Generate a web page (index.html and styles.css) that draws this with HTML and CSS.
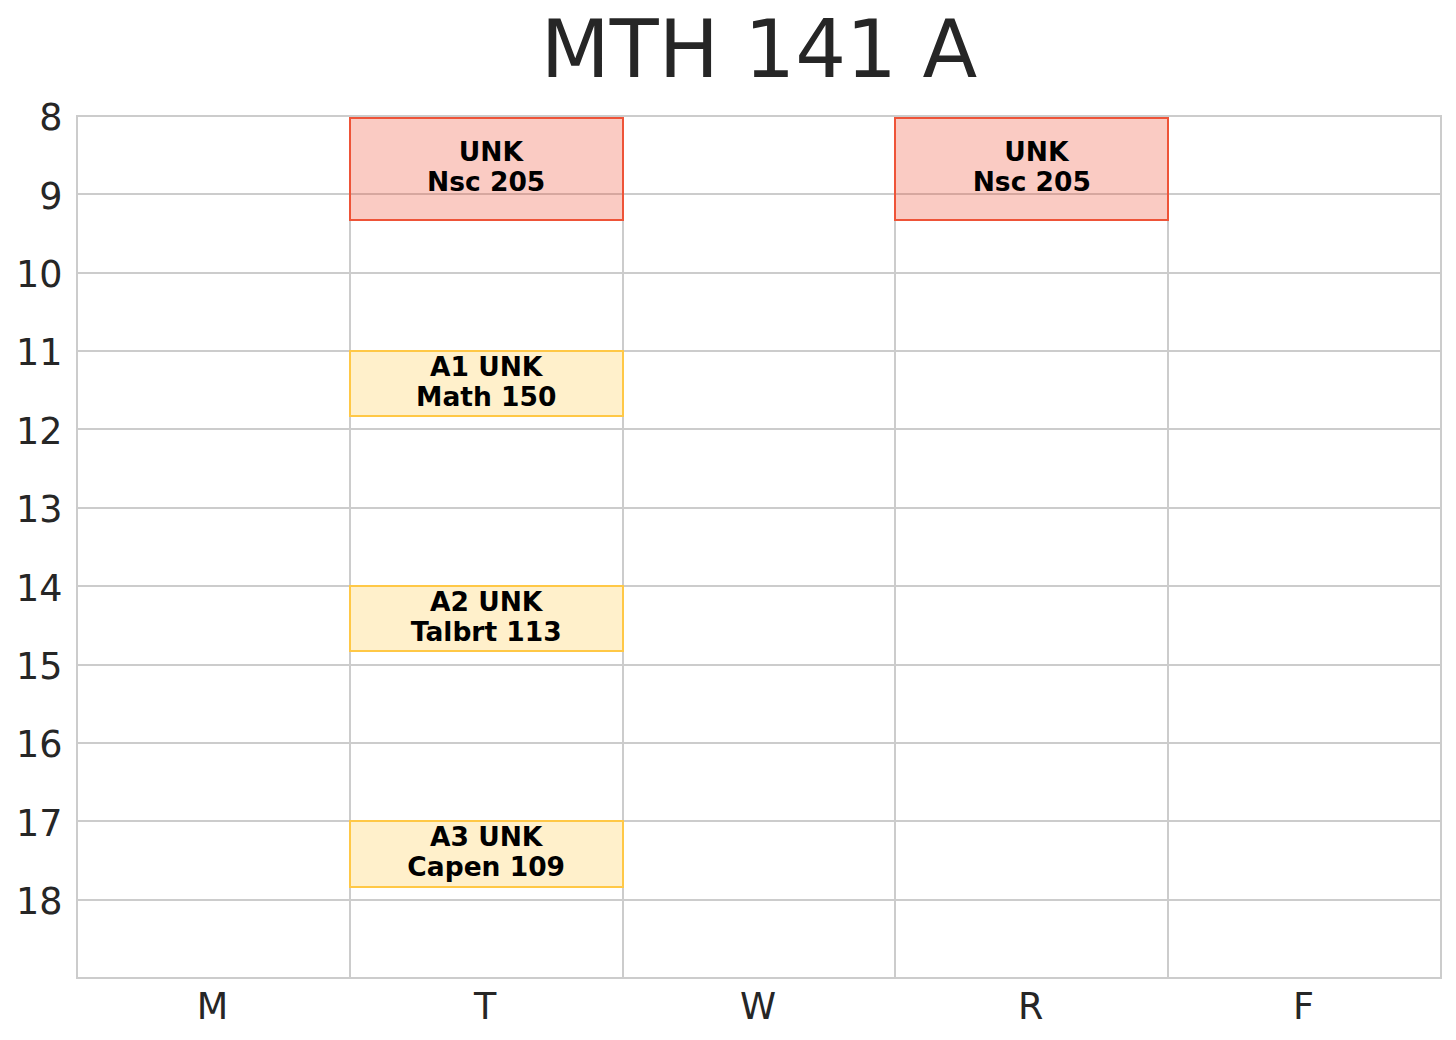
FILE: index.html
```html
<!DOCTYPE html>
<html lang="en">
<head>
<meta charset="utf-8">
<title>MTH 141 A</title>
<link rel="stylesheet" href="styles.css">
</head>
<body>
<div class="figure">
  <h1 class="title">MTH 141 A</h1>
  <div class="chart-row">
    <div class="y-axis">
      <div class="y-tick"><span>8</span></div>
      <div class="y-tick"><span>9</span></div>
      <div class="y-tick"><span>10</span></div>
      <div class="y-tick"><span>11</span></div>
      <div class="y-tick"><span>12</span></div>
      <div class="y-tick"><span>13</span></div>
      <div class="y-tick"><span>14</span></div>
      <div class="y-tick"><span>15</span></div>
      <div class="y-tick"><span>16</span></div>
      <div class="y-tick"><span>17</span></div>
      <div class="y-tick"><span>18</span></div>
    </div>
    <div class="plot">
      <div class="cell"></div><div class="cell"></div><div class="cell"></div><div class="cell"></div><div class="cell"></div>
      <div class="cell"></div><div class="cell"></div><div class="cell"></div><div class="cell"></div><div class="cell"></div>
      <div class="cell"></div><div class="cell"></div><div class="cell"></div><div class="cell"></div><div class="cell"></div>
      <div class="cell"></div><div class="cell"></div><div class="cell"></div><div class="cell"></div><div class="cell"></div>
      <div class="cell"></div><div class="cell"></div><div class="cell"></div><div class="cell"></div><div class="cell"></div>
      <div class="cell"></div><div class="cell"></div><div class="cell"></div><div class="cell"></div><div class="cell"></div>
      <div class="cell"></div><div class="cell"></div><div class="cell"></div><div class="cell"></div><div class="cell"></div>
      <div class="cell"></div><div class="cell"></div><div class="cell"></div><div class="cell"></div><div class="cell"></div>
      <div class="cell"></div><div class="cell"></div><div class="cell"></div><div class="cell"></div><div class="cell"></div>
      <div class="cell"></div><div class="cell"></div><div class="cell"></div><div class="cell"></div><div class="cell"></div>
      <div class="cell"></div><div class="cell"></div><div class="cell"></div><div class="cell"></div><div class="cell"></div>

      <div class="event lecture" style="--day:1;--start:0.02;--dur:1.3133"><span class="label"> UNK
Nsc 205</span></div>
      <div class="event lecture" style="--day:3;--start:0.02;--dur:1.3133"><span class="label"> UNK
Nsc 205</span></div>
      <div class="event lab" style="--day:1;--start:3;--dur:0.8333"><span class="label">A1 UNK
Math 150</span></div>
      <div class="event lab" style="--day:1;--start:6;--dur:0.8333"><span class="label">A2 UNK
Talbrt 113</span></div>
      <div class="event lab" style="--day:1;--start:9;--dur:0.8333"><span class="label">A3 UNK
Capen 109</span></div>
    </div>
  </div>
  <div class="x-axis">
    <div class="x-tick">M</div>
    <div class="x-tick">T</div>
    <div class="x-tick">W</div>
    <div class="x-tick">R</div>
    <div class="x-tick">F</div>
  </div>
</div>
</body>
</html>
```
FILE: styles.css
```css
html, body {
  margin: 0;
  padding: 0;
  background: #ffffff;
}

body {
  width: 1456px;
  height: 1040px;
  overflow: hidden;
  font-family: "DejaVu Sans", "Liberation Sans", sans-serif;
  color: #262626;
}

.figure {
  display: flex;
  flex-direction: column;
}

.title {
  margin: 5px 0 20px 76px;
  width: 1366px;
  height: 90px;
  font-size: 80px;
  line-height: 90px;
  font-weight: normal;
  text-align: center;
  color: #262626;
}

.chart-row {
  display: flex;
}

.y-axis {
  width: 76px;
  display: grid;
  grid-template-rows: repeat(11, 78.364px);
  align-content: start;
}

.y-tick span {
  display: block;
  margin-top: -16.6px;
  padding-right: 13.5px;
  height: 40px;
  font-size: 36.5px;
  line-height: 40px;
  text-align: right;
}

.plot {
  position: relative;
  width: 1366px;
  height: 864px;
  box-sizing: border-box;
  border-right: 2px solid #cccccc;
  border-bottom: 2px solid #cccccc;
  display: grid;
  grid-template-columns: repeat(5, 1fr);
  grid-template-rows: repeat(11, 1fr);
}

.cell {
  border-left: 2px solid #cccccc;
  border-top: 2px solid #cccccc;
}

.event {
  position: absolute;
  box-sizing: border-box;
  left: calc(var(--day) * 20%);
  width: calc(20% + 2px);
  top: calc(var(--start) / 11 * 100%);
  height: calc(var(--dur) / 11 * 100% + 2px);
  border: 2px solid;
  display: flex;
  align-items: center;
  justify-content: center;
  padding-bottom: 4px;
}

.event.lecture {
  border-color: rgb(238, 84, 56);
  background: rgba(238, 84, 56, 0.3);
}

.event.lab {
  border-color: rgb(255, 200, 70);
  background: rgba(255, 200, 70, 0.28);
}

.label {
  white-space: pre;
  text-align: center;
  font-size: 26.5px;
  line-height: 30px;
  font-weight: bold;
  color: #000000;
}

.x-axis {
  margin-left: 76px;
  width: 1364px;
  display: grid;
  grid-template-columns: repeat(5, 1fr);
  margin-top: 8px;
}

.x-tick {
  text-align: center;
  font-size: 36.5px;
  line-height: 40px;
}
```
